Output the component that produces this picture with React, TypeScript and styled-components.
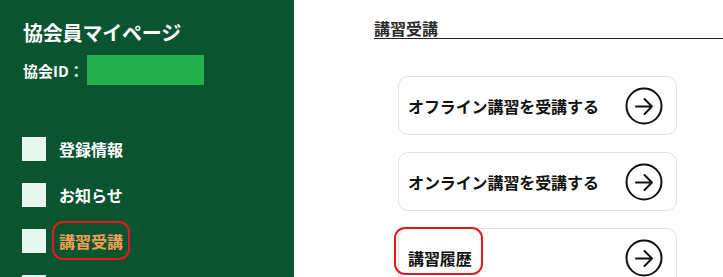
import React from "react";
import styled, { createGlobalStyle } from "styled-components";

const Global = createGlobalStyle`
  html, body { margin: 0; padding: 0; background: #ffffff; }
  body { font-family: "Noto Sans CJK JP", "Noto Sans", sans-serif; overflow: hidden; }
  * { box-sizing: border-box; }
`;

const Page = styled.div`
  display: flex;
  width: 723px;
  height: 277px;
  overflow: hidden;
`;

const Sidebar = styled.aside`
  width: 294px;
  flex-shrink: 0;
  background: #0b5430;
  color: #ffffff;
  padding: 23px 0 0 23px;
  display: flex;
  flex-direction: column;
`;

const Title = styled.h1`
  margin: 0;
  font-size: 20px;
  line-height: 20px;
  font-weight: 700;
  letter-spacing: -0.2px;
`;

const IdRow = styled.div`
  margin-top: 12px;
  display: flex;
  align-items: center;
  gap: 3px;
  font-size: 15px;
  line-height: 15px;
  font-weight: 700;
`;

const IdBox = styled.span`
  display: block;
  width: 117px;
  height: 30px;
  background: #22b14c;
`;

const Menu = styled.ul`
  list-style: none;
  margin: 52px 0 0 -1px;
  padding: 0;
  display: flex;
  flex-direction: column;
  gap: 22px;
`;

const MenuItem = styled.li`
  display: flex;
  align-items: center;
  gap: 13px;
  height: 24px;
`;

const Check = styled.span`
  width: 24px;
  height: 24px;
  background: #e8f6f0;
  flex-shrink: 0;
`;

const MenuLabel = styled.span<{ $active?: boolean }>`
  position: relative;
  font-size: 16px;
  line-height: 16px;
  font-weight: 700;
  color: ${(p) => (p.$active ? "#f2a057" : "#ffffff")};
`;

const Highlight = styled.span<{ $l: number; $t: number; $w: number; $h: number }>`
  position: absolute;
  left: ${(p) => p.$l}px;
  top: ${(p) => p.$t}px;
  width: ${(p) => p.$w}px;
  height: ${(p) => p.$h}px;
  border: 2.5px solid #e8161f;
  border-radius: 11px;
  pointer-events: none;
`;

const Main = styled.main`
  flex: 1;
  padding: 20px 0 0 80px;
  display: flex;
  flex-direction: column;
`;

const SectionTitle = styled.h2`
  margin: 0;
  font-size: 16px;
  line-height: 16px;
  font-weight: 700;
  color: #2b2b2b;
  padding-bottom: 2px;
  border-bottom: 1.5px solid #222222;
`;

const CardList = styled.div`
  margin: 37px 0 0 24px;
  display: flex;
  flex-direction: column;
  gap: 17px;
`;

const Card = styled.a`
  position: relative;
  width: 279px;
  height: 59px;
  flex-shrink: 0;
  border: 1px solid #e1e1e6;
  border-radius: 10px;
  display: flex;
  align-items: center;
  justify-content: space-between;
  padding: 0 13px 0 9px;
  color: #111111;
  text-decoration: none;
  background: #ffffff;
`;

const CardText = styled.span`
  position: relative;
  font-size: 16px;
  line-height: 16px;
  font-weight: 700;
  letter-spacing: -0.1px;
`;

const ArrowIcon = () => (
  <svg width="38" height="38" viewBox="0 0 38 38" fill="none">
    <circle cx="19" cy="19" r="17.5" stroke="#111" strokeWidth="2" />
    <path d="M11 19.5 H27 M19.5 12 L27 19.5 L19.5 27" stroke="#111" strokeWidth="2" strokeLinecap="round" strokeLinejoin="round" />
  </svg>
);

export default function App() {
  return (
    <>
      <Global />
      <Page>
        <Sidebar>
          <Title>協会員マイページ</Title>
          <IdRow>
            <span>協会ID：</span>
            <IdBox />
          </IdRow>
          <Menu>
            <MenuItem>
              <Check />
              <MenuLabel>登録情報</MenuLabel>
            </MenuItem>
            <MenuItem>
              <Check />
              <MenuLabel>お知らせ</MenuLabel>
            </MenuItem>
            <MenuItem>
              <Check />
              <MenuLabel $active>
                講習受講
                <Highlight $l={-7} $t={-12} $w={78} $h={39} />
              </MenuLabel>
            </MenuItem>
            <MenuItem>
              <Check />
            </MenuItem>
          </Menu>
        </Sidebar>
        <Main>
          <SectionTitle>講習受講</SectionTitle>
          <CardList>
            <Card href="#">
              <CardText>オフライン講習を受講する</CardText>
              <ArrowIcon />
            </Card>
            <Card href="#">
              <CardText>オンライン講習を受講する</CardText>
              <ArrowIcon />
            </Card>
            <Card href="#">
              <CardText>
                講習履歴
                <Highlight $l={-14} $t={-23} $w={89} $h={48} />
              </CardText>
              <ArrowIcon />
            </Card>
          </CardList>
        </Main>
      </Page>
    </>
  );
}
